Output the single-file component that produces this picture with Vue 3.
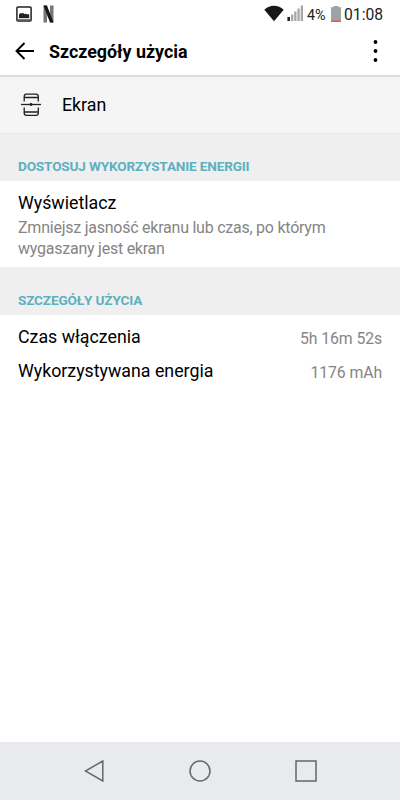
<script setup>
const details = [
  { label: 'Czas włączenia', value: '5h 16m 52s' },
  { label: 'Wykorzystywana energia', value: '1176 mAh' },
]
</script>

<template>
  <div class="screen">
    <header class="status">
      <svg class="picture" width="16" height="16" viewBox="0 0 16 16">
        <rect x="0.9" y="0.9" width="14.2" height="14.2" rx="1" fill="#fff" stroke="#202224" stroke-width="1.5" />
        <path d="M3 12V8.500L4.500 7L6 7.500L7 6.700L8.500 8.200L10 7.500L11 8.500L12.500 8L13.200 8.700V12z" fill="#202224" />
        <path d="M1.500 13.500h13" stroke="#777" stroke-width="1.500" />
      </svg>
      <svg class="netflix" width="11" height="18" viewBox="0 0 11 18">
        <path d="M.5.5H4v17H.5zM7 .5h3.500v17H7z" fill="#777" />
        <path d="M.5.5H4l6.500 17H7z" fill="#151718" />
      </svg>
      <span class="spacer"></span>
      <svg class="wifi" width="20" height="17" viewBox="0 0 20 17">
        <path d="M.3 4.700C5.800-.6 14.200-.6 19.700 4.700L10 16.300z" fill="#151718" />
      </svg>
      <svg class="signal" width="17" height="17" viewBox="0 0 17 17">
        <path d="M.4 12h2.600v4H.4z" fill="#202224" />
        <path d="M4 9.500h2.300V16H4zM7.200 6.500h2.300V16H7.200zM10.400 3.500h2.300V16h-2.300zM13.700.500H16V16h-2.300z" fill="#a5a8a8" />
      </svg>
      <span class="percent">4%</span>
      <svg class="battery" width="10" height="16" viewBox="0 0 10 16">
        <path d="M2.500 0h5v1.300H10V16H0V1.300h2.500z" fill="#9fa3a3" />
        <path d="M0 14.500h10V16H0z" fill="#ee5a36" />
      </svg>
      <span class="clock">01:08</span>
    </header>

    <div class="appbar">
      <svg class="back" width="20" height="18" viewBox="0 0 20 18">
        <path d="M9.500 1 1.500 9l8 8M1.500 9h17.500" fill="none" stroke="#000" stroke-width="1.900" />
      </svg>
      <h1>Szczegóły użycia</h1>
      <span class="spacer"></span>
      <svg width="5" height="24" viewBox="0 0 5 24">
        <circle cx="2.500" cy="3" r="1.900" /><circle cx="2.500" cy="12" r="1.900" /><circle cx="2.500" cy="21" r="1.900" />
      </svg>
    </div>

    <div class="subject">
      <svg width="22" height="24" viewBox="0 0 22 24" fill="none" stroke="#202224" stroke-width="1.300">
        <path d="M4.200 8.500V3.500Q4.200 1.200 6.500 1.200H16Q18.300 1.200 18.300 3.500v5M4.200 14.500v5.500q0 2.300 2.300 2.300H16q2.300 0 2.300-2.300v-5.500M4.200 4.500H18.300M4.200 19H18.300" />
        <path d="M1 11.500h20" />
        <circle cx="11" cy="11.500" r=".8" fill="#202224" />
      </svg>
      <span>Ekran</span>
    </div>

    <h2 class="section first">DOSTOSUJ WYKORZYSTANIE ENERGII</h2>
    <div class="display">
      <div class="label">Wyświetlacz</div>
      <p>Zmniejsz jasność ekranu lub czas, po którym<br>wygaszany jest ekran</p>
    </div>

    <h2 class="section second">SZCZEGÓŁY UŻYCIA</h2>
    <div class="details">
      <div v-for="item in details" :key="item.label" class="detail">
        <span class="label">{{ item.label }}</span>
        <span class="value">{{ item.value }}</span>
      </div>
    </div>

    <nav class="navigation">
      <svg width="20" height="22" viewBox="0 0 20 22"><path d="M18.800 1v20L1.300 11z" /></svg>
      <svg width="22" height="22" viewBox="0 0 22 22"><circle cx="11" cy="11" r="10" /></svg>
      <svg width="22" height="22" viewBox="0 0 22 22"><path d="M1 1h20v20H1z" /></svg>
    </nav>
  </div>
</template>

<style>
body { margin: 0; background: #fff; }
</style>

<style scoped>
* { box-sizing: border-box; }
.screen { width: 400px; height: 800px; display: flex; flex-direction: column; overflow: hidden; background: #fff; color: #000; font-family: Roboto, sans-serif; }
svg { display: block; flex: none; }
.spacer { flex: 1; }
.status { height: 28px; display: flex; align-items: center; padding: 0 17px 0 16px; color: #202224; line-height: 28px; flex: none; }
.picture { margin-top: -1px; }
.netflix { margin-left: 11px; margin-top: -1px; }
.wifi { margin-right: 3px; margin-top: -1px; }
.signal { margin-top: -1px; }
.percent { font-size: 14.300px; width: 19px; margin-left: 3px; padding-top: 1px; white-space: nowrap; }
.battery { margin: -1px 3px 0 5px; }
.clock { font-size: 15.700px; width: 39px; padding-top: 1px; white-space: nowrap; }
.appbar { height: 49px; display: flex; align-items: center; padding: 0 22px 2px 15px; border-bottom: 2px solid #d9dddc; flex: none; }
h1 { font-size: 17.850px; line-height: 26px; font-weight: 700; margin: 3px 0 0 14px; white-space: nowrap; }
.subject { height: 57px; display: flex; align-items: center; padding: 0 20px; background: #f5f5f5; border-bottom: 1px dotted #dedede; font-size: 17.800px; flex: none; }
.subject span { margin-left: 20px; padding-bottom: 2px; }
.section { margin: 0; padding: 23px 18px 0; background: #efefef; color: #5eafc0; font-size: 13.600px; letter-spacing: -.17px; line-height: 18px; font-weight: 700; flex: none; white-space: nowrap; }
.first { height: 47px; }
.second { height: 48px; padding-top: 24px; }
.display { height: 86px; padding: 9px 18px 0; flex: none; }
.label { font-size: 17.800px; line-height: 26px; white-space: nowrap; }
p { margin: 2px 0 0; color: #858585; font-size: 16px; letter-spacing: -.24px; line-height: 20.500px; white-space: nowrap; }
.details { padding: 5px 18px; flex: 1; }
.detail { display: flex; justify-content: space-between; align-items: center; height: 34px; }
.value { color: #858585; font-size: 15.800px; letter-spacing: -.1px; line-height: 20px; margin-top: 3px; }
.navigation { height: 58px; background: #e8eaed; display: flex; align-items: center; justify-content: space-between; padding: 0 83px 0 84px; flex: none; }
.navigation svg { fill: none; stroke: #646668; stroke-width: 1.500; }
</style>
